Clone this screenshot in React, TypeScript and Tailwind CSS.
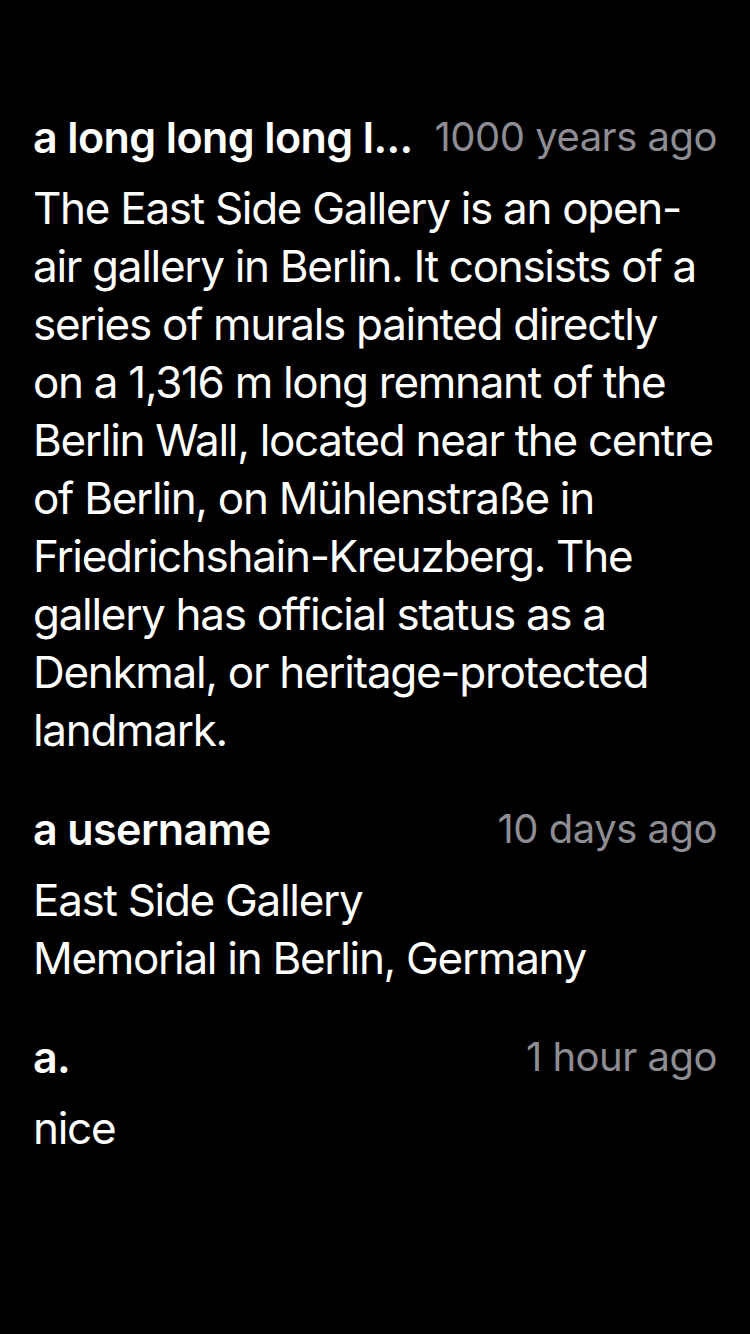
import React from "react";

const lines1 = [
  "The East Side Gallery is an open-",
  "air gallery in Berlin. It consists of a",
  "series of murals painted directly",
  "on a 1,316 m long remnant of the",
  "Berlin Wall, located near the centre",
  "of Berlin, on Mühlenstraße in",
  "Friedrichshain-Kreuzberg. The",
  "gallery has official status as a",
  "Denkmal, or heritage-protected",
  "landmark.",
];

function Comment({ name, time, lines, first }: { name: string; time: string; lines: string[]; first?: boolean }) {
  return (
    <div className={first ? "" : "mt-[41px]"}>
      <div className="flex items-center justify-between h-[58px] gap-[20px]">
        <div className="font-semibold text-white text-[43px] tracking-[-0.6px] whitespace-nowrap">{name}</div>
        <div className="text-[#8d8d93] text-[40px] tracking-[-0.5px] whitespace-nowrap shrink-0">{time}</div>
      </div>
      <div className="mt-[13px] text-white text-[44px] leading-[58px] tracking-[-1.3px]">
        {lines.map((l, i) => (
          <div key={i} className="whitespace-nowrap">{l}</div>
        ))}
      </div>
    </div>
  );
}

export default function App() {
  return (
    <div className="w-[750px] h-[1334px] bg-black px-[33px] pt-[108px]" style={{ fontFamily: "Inter, 'Liberation Sans', sans-serif" }}>
      <Comment first name="a long long long l..." time="1000 years ago" lines={lines1} />
      <Comment name="a username" time="10 days ago" lines={["East Side Gallery", "Memorial in Berlin, Germany"]} />
      <Comment name="a." time="1 hour ago" lines={["nice"]} />
    </div>
  );
}
